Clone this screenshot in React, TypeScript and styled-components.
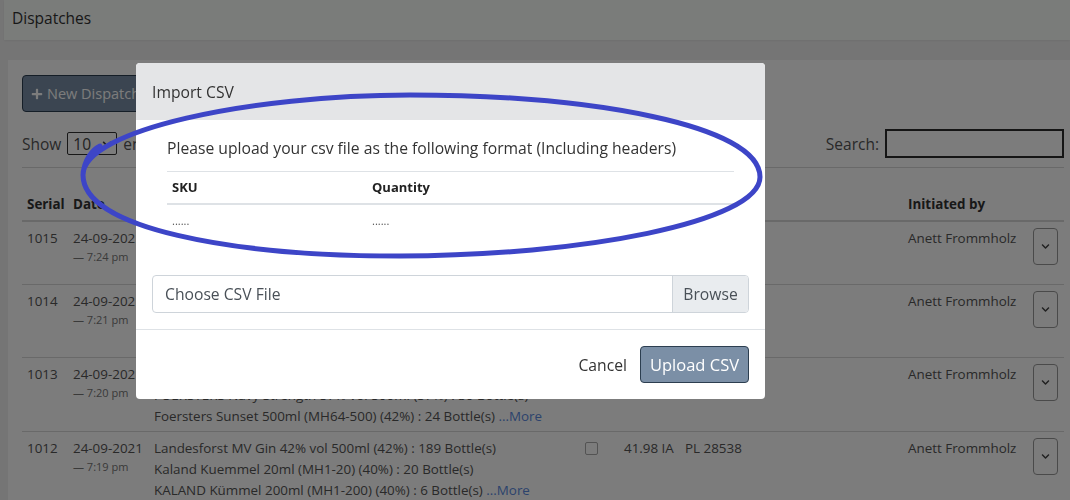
import styled, { createGlobalStyle } from 'styled-components';
import { FaPlus, FaChevronDown } from 'react-icons/fa';

type Dispatch = {
  serial: string;
  date: string;
  time: string;
  products: string[];
  amount?: string;
  reference?: string;
  by: string;
  height: number;
};

const DISPATCHES: Dispatch[] = [
  {
    serial: '1015',
    date: '24-09-2021',
    time: '7:24 pm',
    products: ['Foersters Sunset 500ml (MH64-500) (42%) : 12 Bottle(s)'],
    amount: '12.00 IA',
    reference: 'PL 28541',
    by: 'Anett Frommholz',
    height: 64
  },
  {
    serial: '1014',
    date: '24-09-2021',
    time: '7:21 pm',
    products: [
      'Landesforst MV Gin 42% vol 500ml (42%) : 60 Bottle(s)',
      'Foersters Sunset 500ml (MH64-500) (42%) : 6 Bottle(s)'
    ],
    amount: '14.10 IA',
    reference: 'PL 28540',
    by: 'Anett Frommholz',
    height: 73
  },
  {
    serial: '1013',
    date: '24-09-2021',
    time: '7:20 pm',
    products: [
      'Landesforst MV Gin 42% vol 500ml (42%) : 48 Bottle(s)',
      'FOERSTERS Navy Strength 57% vol 500ml (57%) : 30 Bottle(s)',
      'Foersters Sunset 500ml (MH64-500) (42%) : 24 Bottle(s)'
    ],
    amount: '30.11 IA',
    reference: 'PL 28539',
    by: 'Anett Frommholz',
    height: 72
  },
  {
    serial: '1012',
    date: '24-09-2021',
    time: '7:19 pm',
    products: [
      'Landesforst MV Gin 42% vol 500ml (42%) : 189 Bottle(s)',
      'Kaland Kuemmel 20ml (MH1-20) (40%) : 20 Bottle(s)',
      'KALAND Kümmel 200ml (MH1-200) (40%) : 6 Bottle(s)'
    ],
    amount: '41.98 IA',
    reference: 'PL 28538',
    by: 'Anett Frommholz',
    height: 72
  }
];

export default function App() {
  return (
    <>
      <GlobalStyle />
      <Page>
        <TopBar>
          <PageTitle>Dispatches</PageTitle>
        </TopBar>
        <Card>
          <NewButton>
            <FaPlus size={12} /> New Dispatch
          </NewButton>
          <Controls>
            <ControlLabel>
              Show
              <SelectBox>
                10 <FaChevronDown size={10} />
              </SelectBox>
              entries
            </ControlLabel>
            <ControlLabel>
              Search:
              <SearchInput />
            </ControlLabel>
          </Controls>
          <Table>
            <colgroup>
              <col style={{ width: 46 }} />
              <col style={{ width: 81 }} />
              <col style={{ width: 431 }} />
              <col style={{ width: 39 }} />
              <col style={{ width: 61 }} />
              <col style={{ width: 223 }} />
              <col style={{ width: 125 }} />
              <col style={{ width: 36 }} />
            </colgroup>
            <thead>
              <tr>
                <Th>Serial</Th>
                <Th>Date</Th>
                <Th>Products</Th>
                <Th />
                <Th>Pallets</Th>
                <Th>Reference</Th>
                <Th>Initiated by</Th>
                <Th />
              </tr>
            </thead>
            <tbody>
              {DISPATCHES.map(d => (
                <Row key={d.serial} $h={d.height}>
                  <Td>{d.serial}</Td>
                  <Td>
                    {d.date}
                    <Time>— {d.time}</Time>
                  </Td>
                  <Td>
                    {d.products.map((p, i) => (
                      <div key={i}>
                        {p}
                        {i === d.products.length - 1 && d.products.length > 2 && (
                          <MoreLink> ...More</MoreLink>
                        )}
                      </div>
                    ))}
                  </Td>
                  <Td>
                    <Check />
                  </Td>
                  <Td>{d.amount}</Td>
                  <Td>{d.reference}</Td>
                  <Td>{d.by}</Td>
                  <Td>
                    <ActionButton>
                      <FaChevronDown size={9} />
                    </ActionButton>
                  </Td>
                </Row>
              ))}
            </tbody>
          </Table>
        </Card>
      </Page>

      <Backdrop>
        <Modal>
          <ModalHeader>
            <ModalTitle>Import CSV</ModalTitle>
          </ModalHeader>
          <ModalBody>
            <FormatBlock>
              <Intro>
                Please upload your csv file as the following format (Including
                headers)
              </Intro>
              <FormatTable>
                <thead>
                  <tr>
                    <FormatTh $w={200}>SKU</FormatTh>
                    <FormatTh>Quantity</FormatTh>
                  </tr>
                </thead>
                <tbody>
                  <tr>
                    <FormatTd>......</FormatTd>
                    <FormatTd>......</FormatTd>
                  </tr>
                </tbody>
              </FormatTable>
            </FormatBlock>
            <FileInput>
              <FileLabel>Choose CSV File</FileLabel>
              <BrowseButton>Browse</BrowseButton>
            </FileInput>
          </ModalBody>
          <ModalFooter>
            <CancelButton>Cancel</CancelButton>
            <UploadButton>Upload CSV</UploadButton>
          </ModalFooter>
        </Modal>
      </Backdrop>

      <Annotation viewBox="0 0 1070 500" width="1070" height="500">
        <path
          d="M83 175 C83 130 250 95 410 95 C590 95 760 125 760 177 C760 222 580 256 400 256 C230 256 83 228 83 175 C84 160 92 150 100 146"
          fill="none"
          stroke="#3d45c7"
          strokeWidth="5"
          strokeLinecap="round"
        />
      </Annotation>
    </>
  );
}

const GlobalStyle = createGlobalStyle`
  html, body {
    margin: 0;
    padding: 0;
  }
  body {
    width: 1070px;
    height: 500px;
    overflow: hidden;
    background: #f1f1f1;
    font-family: 'Open Sans', 'Noto Sans', sans-serif;
    color: #555;
  }
  * {
    box-sizing: border-box;
  }
`;

const Page = styled.div`
  width: 1070px;
  height: 500px;
`;

const TopBar = styled.header`
  height: 40px;
  margin-left: 4px;
  padding: 8px 8px 0;
  background: #fbfefb;
  box-shadow: 0 1px 2px rgba(0, 0, 0, 0.06);
`;

const PageTitle = styled.h1`
  margin: 0;
  font-size: 15.5px;
  font-weight: 400;
  line-height: 20px;
  color: #333;
`;

const Card = styled.main`
  margin-top: 20px;
  margin-left: 8px;
  padding: 15px 6px 0 14px;
  background: #fff;
  height: 440px;
`;

const NewButton = styled.button`
  display: inline-flex;
  align-items: center;
  gap: 4px;
  height: 37px;
  padding: 0 8px;
  border: 1px solid #2c3e50;
  border-radius: 4px;
  background: #7a8fa6;
  color: #fff;
  font-family: inherit;
  font-size: 14.5px;
`;

const Controls = styled.div`
  display: flex;
  justify-content: space-between;
  align-items: center;
  height: 29px;
  margin-top: 17px;
`;

const ControlLabel = styled.label`
  display: flex;
  align-items: center;
  gap: 6px;
  font-size: 15.5px;
  color: #555;
`;

const SelectBox = styled.span`
  display: inline-flex;
  align-items: center;
  justify-content: space-between;
  width: 50px;
  height: 23px;
  padding: 0 4px 0 5px;
  border: 1px solid #333;
  border-radius: 2px;
  font-size: 15.5px;
  color: #444;
`;

const SearchInput = styled.span`
  display: block;
  width: 179px;
  height: 29px;
  border: 2px solid #2c2c2c;
  background: #fff;
`;

const Table = styled.table`
  width: 1042px;
  margin-top: 9px;
  table-layout: fixed;
  border-collapse: collapse;
  font-size: 13.4px;
`;

const Th = styled.th`
  height: 53px;
  padding: 5px;
  vertical-align: bottom;
  text-align: left;
  font-weight: 700;
  line-height: 21px;
  color: #333;
  border-top: 1px solid #d9d9d9;
  border-bottom: 2px solid #d9d9d9;
  white-space: nowrap;
  overflow: hidden;
`;

const Row = styled.tr<{ $h: number }>`
  height: ${p => p.$h}px;
`;

const Td = styled.td`
  padding: 6px 5px 4px;
  vertical-align: top;
  line-height: 21px;
  border-top: 1px solid #d9d9d9;
  white-space: nowrap;
`;

const Time = styled.small`
  display: block;
  font-size: 11px;
  line-height: 15px;
  color: #777;
`;

const MoreLink = styled.a`
  color: #5b8ae0;
`;

const Check = styled.span`
  display: block;
  width: 13px;
  height: 13px;
  margin-top: 4px;
  border: 1px solid #aaa;
  border-radius: 2px;
  background: #fff;
`;

const ActionButton = styled.button`
  display: flex;
  align-items: center;
  justify-content: center;
  width: 25px;
  height: 37px;
  padding: 0;
  border: 1px solid #999;
  border-radius: 4px;
  background: transparent;
  color: #444;
`;

const Backdrop = styled.div`
  position: fixed;
  inset: 0;
  background: rgba(0, 0, 0, 0.515);
  padding: 63px 0 0 136px;
`;

const Modal = styled.div`
  width: 629px;
  background: #fff;
  border-radius: 4px;
  overflow: hidden;
  color: #333;
`;

const ModalHeader = styled.div`
  display: flex;
  align-items: center;
  height: 57px;
  padding: 0 16px;
  background: #e4e5e7;
`;

const ModalTitle = styled.h5`
  margin: 0;
  font-size: 15.7px;
  font-weight: 400;
  color: #333;
`;

const ModalBody = styled.div`
  padding: 16px;
`;

const FormatBlock = styled.div`
  padding: 0 15px;
`;

const Intro = styled.p`
  margin: 0 0 11px;
  font-size: 15.7px;
  line-height: 24px;
  color: #333;
`;

const FormatTable = styled.table`
  width: 100%;
  margin-bottom: 39px;
  border-collapse: collapse;
  border-top: 1px solid #dee2e6;
`;

const FormatTh = styled.th<{ $w?: number }>`
  width: ${p => (p.$w ? `${p.$w}px` : 'auto')};
  padding: 5px;
  text-align: left;
  font-size: 13px;
  font-weight: 700;
  line-height: 21px;
  color: #222;
  border-bottom: 2px solid #dee2e6;
`;

const FormatTd = styled.td`
  padding: 5px;
  font-size: 11px;
  line-height: 21px;
  color: #555;
`;

const FileInput = styled.div`
  display: flex;
  height: 38px;
  border: 1px solid #ced4da;
  border-radius: 4px;
  overflow: hidden;
`;

const FileLabel = styled.span`
  flex: 1;
  display: flex;
  align-items: center;
  padding: 0 12px;
  font-size: 15.7px;
  color: #495057;
`;

const BrowseButton = styled.span`
  display: flex;
  align-items: center;
  justify-content: center;
  width: 76px;
  background: #e9ecef;
  border-left: 1px solid #ced4da;
  font-size: 15.7px;
  color: #495057;
`;

const ModalFooter = styled.div`
  display: flex;
  justify-content: flex-end;
  align-items: center;
  gap: 13px;
  padding: 16px;
  border-top: 1px solid #dee2e6;
`;

const CancelButton = styled.button`
  padding: 0;
  border: none;
  background: none;
  font-family: inherit;
  font-size: 15.7px;
  color: #333;
`;

const UploadButton = styled.button`
  width: 109px;
  height: 37px;
  padding: 0;
  border: 1px solid #2c3e50;
  border-radius: 4px;
  background: #7b8fa6;
  color: #fff;
  font-family: inherit;
  font-size: 16.5px;
`;

const Annotation = styled.svg`
  position: fixed;
  left: 0;
  top: 0;
  pointer-events: none;
`;
